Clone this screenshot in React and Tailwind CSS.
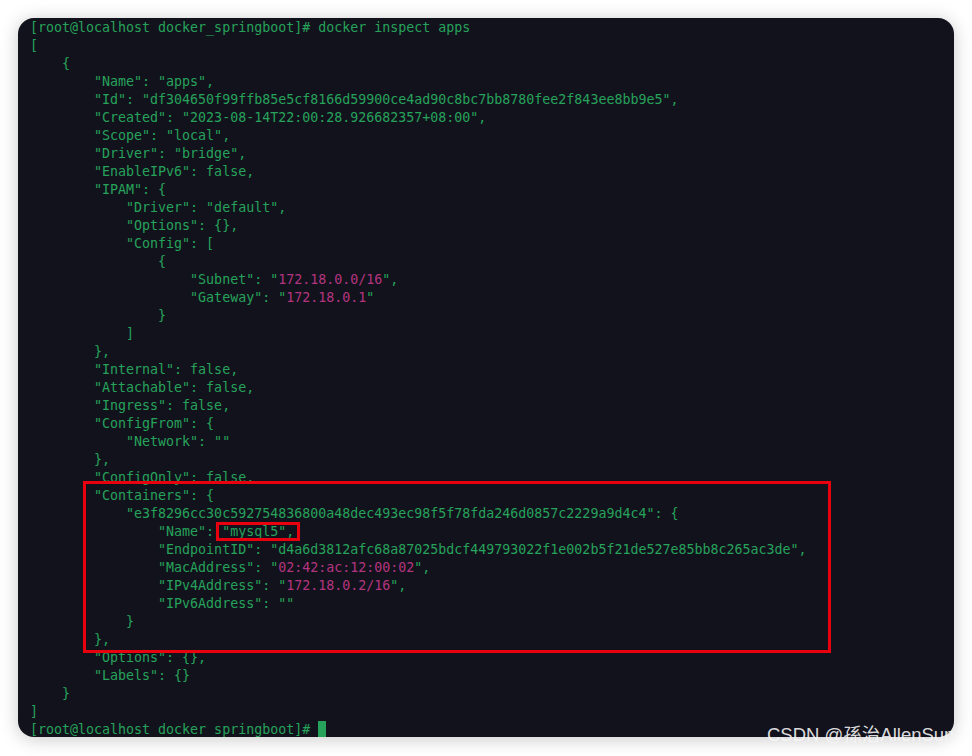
import React from "react";

const G = "text-[#26a25a]";
const M = "text-[#b4357f]";

const lines = [
  ["[root@localhost docker_springboot]# docker inspect apps"],
  ["["],
  ["    {"],
  ['        "Name": "apps",'],
  ['        "Id": "df304650f99ffb85e5cf8166d59900ce4ad90c8bc7bb8780fee2f843ee8bb9e5",'],
  ['        "Created": "2023-08-14T22:00:28.926682357+08:00",'],
  ['        "Scope": "local",'],
  ['        "Driver": "bridge",'],
  ['        "EnableIPv6": false,'],
  ['        "IPAM": {'],
  ['            "Driver": "default",'],
  ['            "Options": {},'],
  ['            "Config": ['],
  ["                {"],
  ['                    "Subnet": "', { m: "172.18.0.0/16" }, '",'],
  ['                    "Gateway": "', { m: "172.18.0.1" }, '"'],
  ["                }"],
  ["            ]"],
  ["        },"],
  ['        "Internal": false,'],
  ['        "Attachable": false,'],
  ['        "Ingress": false,'],
  ['        "ConfigFrom": {'],
  ['            "Network": ""'],
  ["        },"],
  ['        "ConfigOnly": false,'],
  ['        "Containers": {'],
  ['            "e3f8296cc30c592754836800a48dec493ec98f5f78fda246d0857c2229a9d4c4": {'],
  ['                "Name": "mysql5",'],
  ['                "EndpointID": "d4a6d3812afc68a87025bdcf449793022f1e002b5f21de527e85bb8c265ac3de",'],
  ['                "MacAddress": "', { m: "02:42:ac:12:00:02" }, '",'],
  ['                "IPv4Address": "', { m: "172.18.0.2/16" }, '",'],
  ['                "IPv6Address": ""'],
  ["            }"],
  ["        },"],
  ['        "Options": {},'],
  ['        "Labels": {}'],
  ["    }"],
  ["]"],
];

export default function App() {
  return (
    <div className="relative w-[972px] h-[756px] bg-white overflow-hidden">
      <div className="pt-[18px] pl-[18px]">
        <div className="relative w-[936px] h-[719px] rounded-[16px] bg-[#12121d] shadow-[0_2px_18px_rgba(0,0,0,0.22)] overflow-hidden pl-[12px] pt-[1px]">
          <div
            className={`${G} text-[13.3px] leading-[18px] whitespace-pre`}
            style={{ fontFamily: '"DejaVu Sans Mono", "Liberation Mono", monospace' }}
          >
            {lines.map((parts, i) => (
              <div key={i} className="h-[18px]">
                {parts.map((p, j) =>
                  typeof p === "string" ? (
                    <span key={j}>{p}</span>
                  ) : (
                    <span key={j} className={M}>{p.m}</span>
                  )
                )}
              </div>
            ))}
            <div className="h-[18px] flex">
              <span>[root@localhost docker_springboot]# </span>
              <span className="inline-block w-[8px] h-[18px] bg-[#26a25a]"></span>
            </div>
          </div>
          <div className="absolute left-[65px] top-[463px] w-[748px] h-[172px] border-[3px] border-[#e8000f]"></div>
          <div className="absolute left-[198px] top-[504px] w-[84px] h-[19px] border-[3px] border-[#e8000f]"></div>
        </div>
      </div>
      <div
        className="absolute left-[767px] top-[724px] text-[18.5px] leading-[22px] text-[rgba(245,245,245,0.9)] whitespace-nowrap"
        style={{ fontFamily: '"Liberation Sans", Arial, "Noto Sans CJK SC", sans-serif' }}
      >
        CSDN @孫治AllenSun
      </div>
    </div>
  );
}
